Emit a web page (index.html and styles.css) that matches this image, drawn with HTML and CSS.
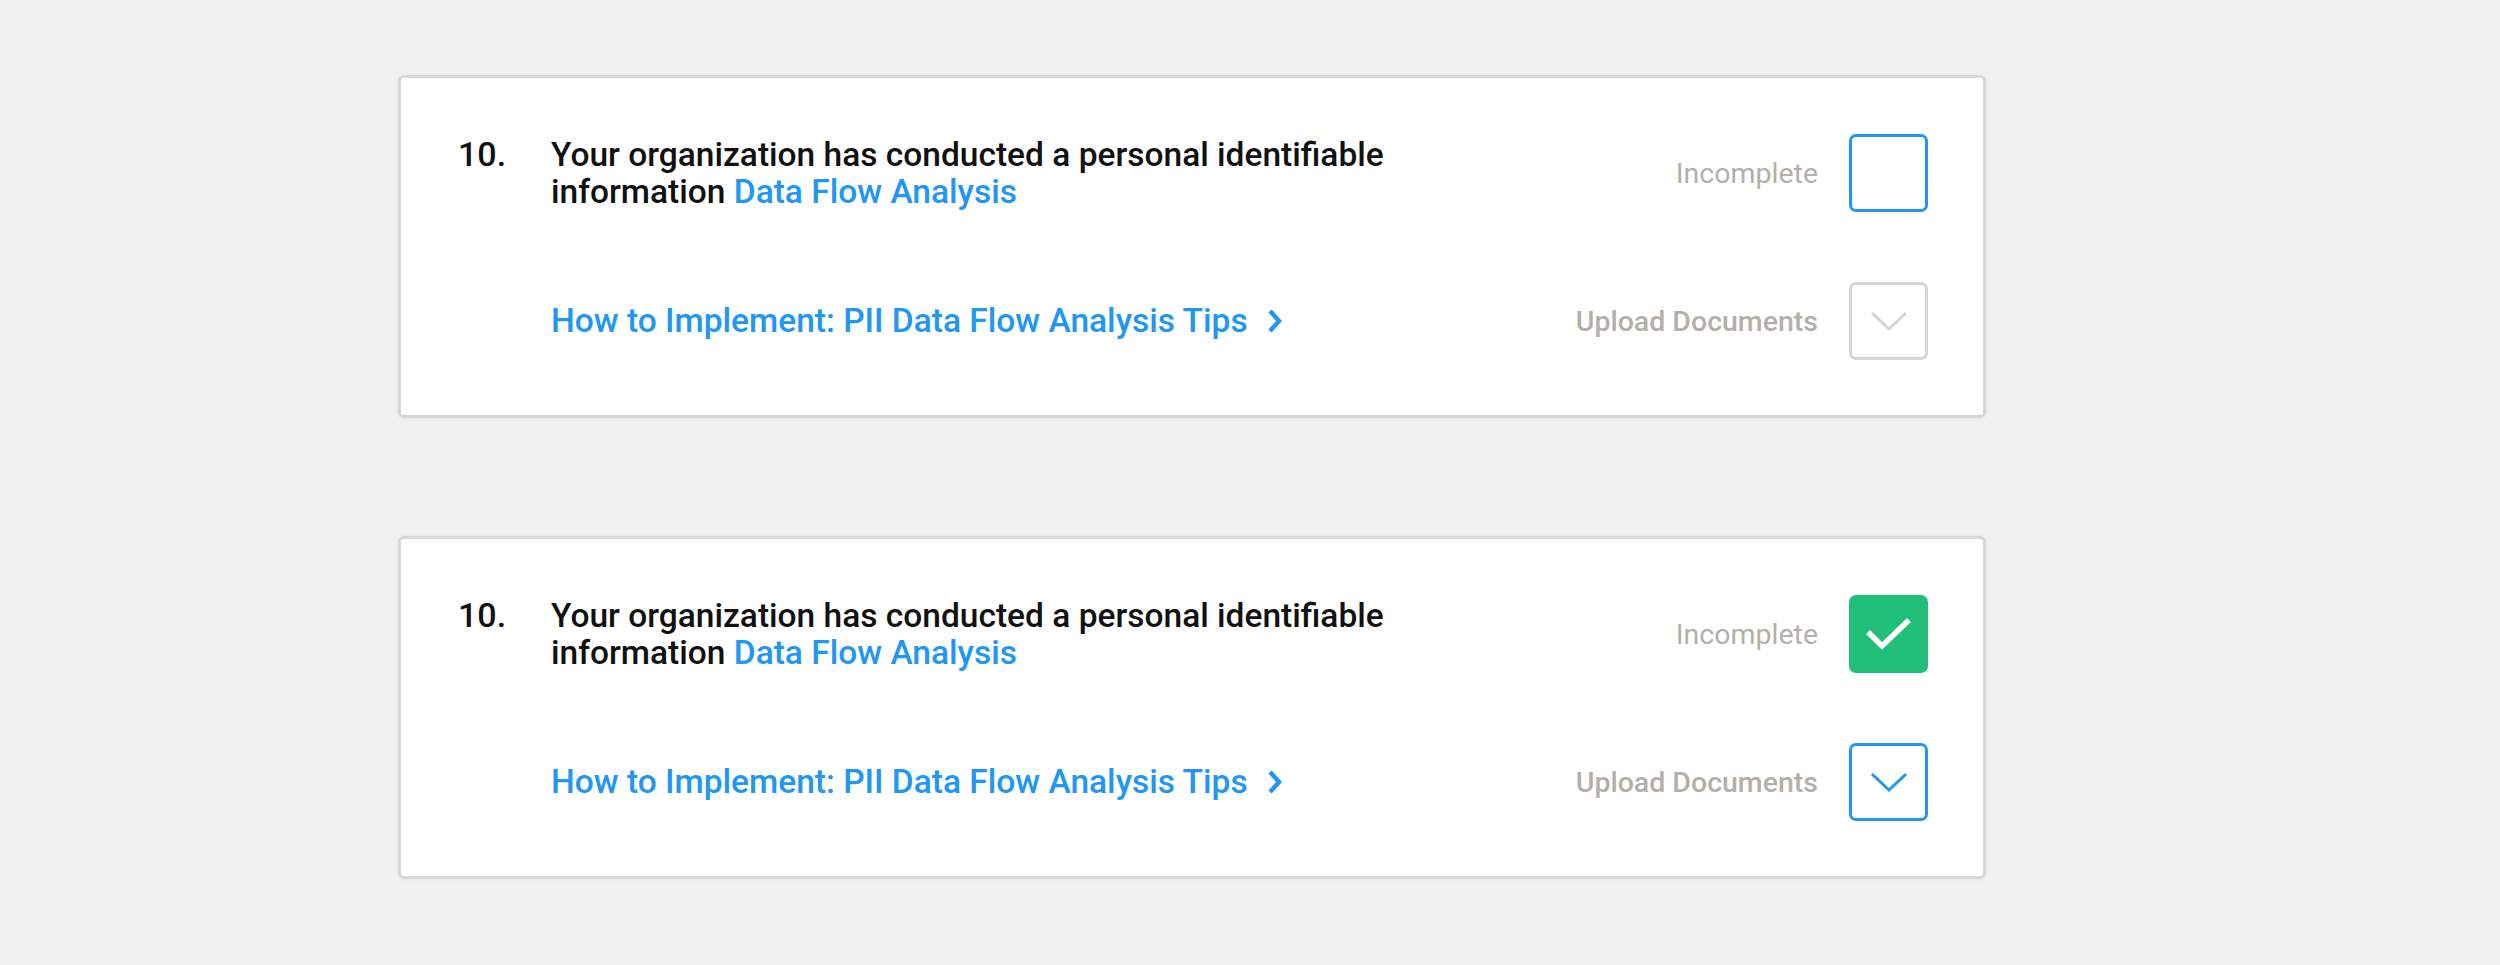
FILE: index.html
```html
<!DOCTYPE html>
<html>
<head>
<meta charset="utf-8">
<link rel="stylesheet" href="styles.css">
</head>
<body>
<main class="list">
  <section class="card">
    <div class="row">
      <div class="main">
        <div class="num">10.</div>
        <div class="question">Your organization has conducted a personal identifiable<br>information <a class="link">Data Flow Analysis</a></div>
      </div>
      <div class="label">Incomplete</div>
      <div class="box box-blue"></div>
    </div>
    <div class="row">
      <div class="main">
        <div class="num"></div>
        <div class="tips"><a class="link">How to Implement: PII Data Flow Analysis Tips</a><svg class="tip-chev" width="16" height="26" viewBox="0 0 16 26"><polyline points="3,3 12,13 3,23" fill="none" stroke="#2196f3" stroke-width="4.5"/></svg></div>
      </div>
      <div class="label label-strong">Upload Documents</div>
      <div class="box box-grey"><svg width="38" height="21" viewBox="0 0 38 21"><polyline points="2,2 19,18 36,2" fill="none" stroke="#d4d4d4" stroke-width="3"/></svg></div>
    </div>
  </section>

  <section class="card">
    <div class="row">
      <div class="main">
        <div class="num">10.</div>
        <div class="question">Your organization has conducted a personal identifiable<br>information <a class="link">Data Flow Analysis</a></div>
      </div>
      <div class="label">Incomplete</div>
      <div class="box box-green"><svg width="46" height="34" viewBox="0 0 46 34"><polyline points="2,15 16,29 43,3" fill="none" stroke="#ffffff" stroke-width="5.5"/></svg></div>
    </div>
    <div class="row">
      <div class="main">
        <div class="num"></div>
        <div class="tips"><a class="link">How to Implement: PII Data Flow Analysis Tips</a><svg class="tip-chev" width="16" height="26" viewBox="0 0 16 26"><polyline points="3,3 12,13 3,23" fill="none" stroke="#2196f3" stroke-width="4.5"/></svg></div>
      </div>
      <div class="label label-strong">Upload Documents</div>
      <div class="box box-blue"><svg width="38" height="21" viewBox="0 0 38 21"><polyline points="2,2 19,18 36,2" fill="none" stroke="#2196f3" stroke-width="3"/></svg></div>
    </div>
  </section>
</main>
</body>
</html>
```

FILE: styles.css
```css
* { box-sizing: border-box; }
html, body {
  margin: 0;
  background: #f1f1f1;
}
body {
  width: 2500px;
  height: 965px;
  font-family: Roboto, "Liberation Sans", sans-serif;
  color: #111111;
}
.list {
  padding: 75px 0 0 398px;
  display: flex;
  flex-direction: column;
  gap: 118px;
}
.card {
  width: 1588px;
  height: 343px;
  background: #ffffff;
  border: 3px solid #d8d8d8;
  border-radius: 6px;
  box-shadow: 0 0 4px rgba(0, 0, 0, 0.06);
  padding: 56px 55px 55px 57px;
  display: flex;
  flex-direction: column;
  gap: 70px;
}
.row {
  display: grid;
  grid-template-columns: 1fr auto 79px;
  align-items: center;
  height: 78px;
}
.main {
  display: flex;
  align-items: baseline;
}
.num {
  width: 93px;
  flex: none;
  font-size: 34px;
  font-weight: 500;
  line-height: 37px;
}
.question {
  font-size: 33.5px;
  font-weight: 500;
  line-height: 37px;
}
.link {
  color: #2196f3;
  text-decoration: none;
}
.tips {
  font-size: 33.5px;
  font-weight: 500;
  line-height: 40px;
  display: flex;
  align-items: center;
  gap: 19px;
}
.tip-chev { display: block; }
.label {
  font-size: 28.5px;
  color: #b4afa9;
  margin-right: 31px;
}
.label-strong { font-weight: 500; }
.box {
  width: 79px;
  height: 78px;
  border-radius: 7px;
  display: flex;
  align-items: center;
  justify-content: center;
}
.box svg { display: block; }
.box-blue { border: 3px solid #2196f3; }
.box-grey { border: 3px solid #d6d6d6; }
.box-green { background: #21bf78; }
```
